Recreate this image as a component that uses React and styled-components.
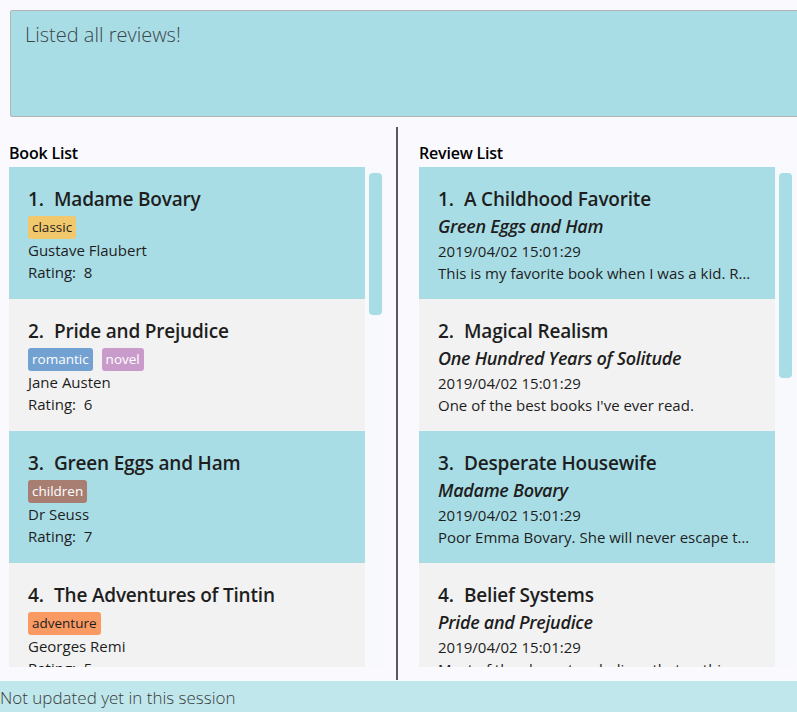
import React from "react";
import styled, { createGlobalStyle } from "styled-components";

const books = [
  { title: "Madame Bovary", tags: ["classic"], author: "Gustave Flaubert", rating: 8 },
  { title: "Pride and Prejudice", tags: ["romantic", "novel"], author: "Jane Austen", rating: 6 },
  { title: "Green Eggs and Ham", tags: ["children"], author: "Dr Seuss", rating: 7 },
  { title: "The Adventures of Tintin", tags: ["adventure"], author: "Georges Remi", rating: 5 },
];

const reviews = [
  {
    title: "A Childhood Favorite",
    book: "Green Eggs and Ham",
    date: "2019/04/02 15:01:29",
    text: "This is my favorite book when I was a kid. Reading it again brings back so many memories.",
  },
  {
    title: "Magical Realism",
    book: "One Hundred Years of Solitude",
    date: "2019/04/02 15:01:29",
    text: "One of the best books I've ever read.",
  },
  {
    title: "Desperate Housewife",
    book: "Madame Bovary",
    date: "2019/04/02 15:01:29",
    text: "Poor Emma Bovary. She will never escape the life she was born into.",
  },
  {
    title: "Belief Systems",
    book: "Pride and Prejudice",
    date: "2019/04/02 15:01:29",
    text: "Most of the characters believe that nothing matters more than money.",
  },
];

const tagColors = {
  classic: { bg: "#f2c86c", fg: "#1d1d1d" },
  romantic: { bg: "#72a1d2", fg: "#ffffff" },
  novel: { bg: "#c99bcb", fg: "#ffffff" },
  children: { bg: "#a97e72", fg: "#ffffff" },
  adventure: { bg: "#f99a63", fg: "#1d1d1d" },
};

const GlobalStyle = createGlobalStyle`
  body {
    margin: 0;
    background: #f9f9fe;
    font-family: "Open Sans", "Noto Sans", sans-serif;
    color: #1e1e1e;
  }
`;

export default function App() {
  return (
    <>
      <GlobalStyle />
      <Window>
        <ResultBox>Listed all reviews!</ResultBox>
        <Main>
          <Panel $left>
            <PanelTitle>Book List</PanelTitle>
            <ListRow>
              <List>
                {books.map((b, i) => (
                  <Card key={b.title} $alt={i % 2 === 1}>
                    <CardTitle>
                      <Num>{i + 1}.</Num>
                      {b.title}
                    </CardTitle>
                    <Tags>
                      {b.tags.map((t) => (
                        <Tag key={t} $bg={tagColors[t].bg} $fg={tagColors[t].fg}>
                          {t}
                        </Tag>
                      ))}
                    </Tags>
                    <Line>{b.author}</Line>
                    <Line>Rating:&nbsp; {b.rating}</Line>
                  </Card>
                ))}
              </List>
              <Track>
                <Thumb $height={142} />
              </Track>
            </ListRow>
          </Panel>
          <Divider />
          <Panel>
            <PanelTitle>Review List</PanelTitle>
            <ListRow>
              <List>
                {reviews.map((r, i) => (
                  <Card key={r.title} $alt={i % 2 === 1}>
                    <CardTitle>
                      <Num>{i + 1}.</Num>
                      {r.title}
                    </CardTitle>
                    <BookName>{r.book}</BookName>
                    <Line>{r.date}</Line>
                    <Desc>{r.text}</Desc>
                  </Card>
                ))}
              </List>
              <Track>
                <Thumb $height={205} />
              </Track>
            </ListRow>
          </Panel>
        </Main>
        <StatusBar>Not updated yet in this session</StatusBar>
      </Window>
    </>
  );
}

const Window = styled.div`
  height: 712px;
  display: flex;
  flex-direction: column;
  overflow: hidden;
`;

const ResultBox = styled.div`
  margin: 10px -4px 0 10px;
  height: 107px;
  box-sizing: border-box;
  background: #a9dde6;
  border: 1px solid #b2b4b4;
  border-radius: 2px;
  padding: 10px 14px;
  font-size: 20px;
  font-weight: 300;
  color: #3b4549;
  line-height: 28px;
`;

const Main = styled.div`
  flex: 1;
  min-height: 0;
  display: flex;
  padding-top: 10px;
`;

const Panel = styled.div`
  flex: ${(p) => (p.$left ? "0 0 396px" : "1")};
  box-sizing: border-box;
  min-width: 0;
  display: flex;
  flex-direction: column;
  padding-left: ${(p) => (p.$left ? "9px" : "21px")};
  padding-bottom: 14px;
`;

const PanelTitle = styled.div`
  font-size: 16px;
  font-weight: 600;
  color: #000;
  height: 40px;
  line-height: 20px;
  padding-top: 16px;
  box-sizing: border-box;
  letter-spacing: -0.2px;
`;

const ListRow = styled.div`
  flex: 1;
  min-height: 0;
  display: flex;
`;

const List = styled.div`
  width: 356px;
  overflow: hidden;
`;

const Track = styled.div`
  width: 19px;
  background: #f7f9fd;
  padding: 6px 2px 0 4px;
  box-sizing: border-box;
`;

const Thumb = styled.div`
  height: ${(p) => p.$height}px;
  border-radius: 4px;
  background: #a9dde6;
`;

const Divider = styled.div`
  flex: 0 0 2px;
  background: #5a5a5a;
  margin-bottom: 1px;
`;

const Card = styled.div`
  height: 132px;
  box-sizing: border-box;
  padding: 18px 17px 16px 19px;
  background: ${(p) => (p.$alt ? "#f2f2f2" : "#a9dde6")};
`;

const CardTitle = styled.div`
  font-size: 19px;
  font-weight: 600;
  line-height: 28px;
  white-space: nowrap;
  letter-spacing: -0.2px;
`;

const Num = styled.span`
  display: inline-block;
  width: 26px;
`;

const Tags = styled.div`
  display: flex;
  gap: 9px;
  margin-top: 3px;
  height: 23px;
`;

const Tag = styled.span`
  background: ${(p) => p.$bg};
  color: ${(p) => p.$fg};
  font-size: 13.5px;
  line-height: 22px;
  padding: 0 4px;
  border-radius: 3px;
`;

const Line = styled.div`
  font-size: 15px;
  line-height: 22px;
  white-space: nowrap;
`;

const BookName = styled.div`
  font-size: 18px;
  font-weight: 600;
  font-style: italic;
  line-height: 27px;
  white-space: nowrap;
  letter-spacing: -0.3px;
`;

const Desc = styled(Line)`
  overflow: hidden;
  text-overflow: ellipsis;
`;

const StatusBar = styled.div`
  height: 31px;
  flex-shrink: 0;
  background: #c0e8ec;
  font-size: 17px;
  font-weight: 300;
  color: #3a3a3a;
  line-height: 34px;
`;
